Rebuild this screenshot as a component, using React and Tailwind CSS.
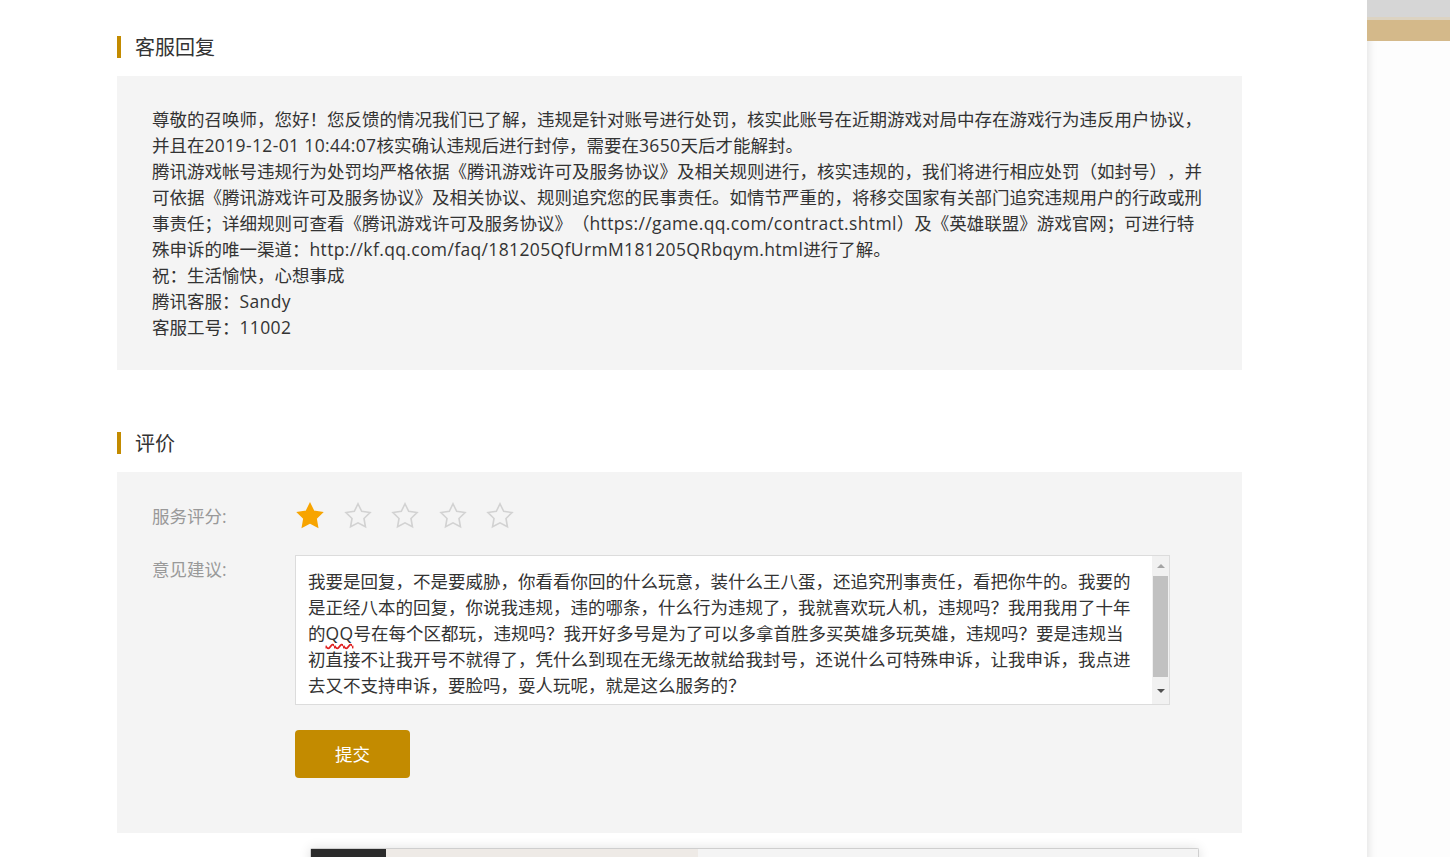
import React, { useState } from 'react';

const replyLines = [
  '尊敬的召唤师，您好！您反馈的情况我们已了解，违规是针对账号进行处罚，核实此账号在近期游戏对局中存在游戏行为违反用户协议，',
  '并且在2019-12-01 10:44:07核实确认违规后进行封停，需要在3650天后才能解封。',
  '腾讯游戏帐号违规行为处罚均严格依据《腾讯游戏许可及服务协议》及相关规则进行，核实违规的，我们将进行相应处罚（如封号），并',
  '可依据《腾讯游戏许可及服务协议》及相关协议、规则追究您的民事责任。如情节严重的，将移交国家有关部门追究违规用户的行政或刑',
  '事责任；详细规则可查看《腾讯游戏许可及服务协议》（https://game.qq.com/contract.shtml）及《英雄联盟》游戏官网；可进行特',
  '殊申诉的唯一渠道：http://kf.qq.com/faq/181205QfUrmM181205QRbqym.html进行了解。',
  '祝：生活愉快，心想事成',
  '腾讯客服：Sandy',
  '客服工号：11002',
];

const opinionLines = [
  '我要是回复，不是要威胁，你看看你回的什么玩意，装什么王八蛋，还追究刑事责任，看把你牛的。我要的',
  '是正经八本的回复，你说我违规，违的哪条，什么行为违规了，我就喜欢玩人机，违规吗？我用我用了十年',
  null,
  '初直接不让我开号不就得了，凭什么到现在无缘无故就给我封号，还说什么可特殊申诉，让我申诉，我点进',
  '去又不支持申诉，要脸吗，耍人玩呢，就是这么服务的？',
];

const font = { fontFamily: '"Open Sans", "Noto Sans CJK SC", sans-serif' };

function Mixed({ text }) {
  return text.split(/([\x00-\x7F]+)/).map((part, i) =>
    /^[\x00-\x7F]+$/.test(part) ? (
      <span key={i} className="tracking-[0.36px]">{part}</span>
    ) : (
      part
    )
  );
}

function Star({ filled, onClick }) {
  return (
    <svg
      onClick={onClick}
      viewBox="0 0 24 24"
      className="w-[30px] h-[30px] cursor-pointer"
      fill={filled ? '#f7a400' : 'none'}
      stroke={filled ? '#f7a400' : '#d2d2d2'}
      strokeWidth="1.3"
      strokeLinejoin="miter"
    >
      <path d="M12 2.2l2.95 6.1 6.65.95-4.8 4.7 1.15 6.65L12 17.45 6.05 20.6 7.2 13.95 2.4 9.25l6.65-.95z" />
    </svg>
  );
}

function SectionTitle({ children }) {
  return (
    <div className="flex items-center h-[22px]">
      <span className="w-[4px] h-[22px] bg-[#c38b00]"></span>
      <h2 className="ml-[14px] pt-[2px] text-[20px] leading-[22px] text-[#333]">{children}</h2>
    </div>
  );
}

export default function App() {
  const [rating, setRating] = useState(1);

  return (
    <div className="flex min-h-screen bg-white text-[#333] [text-spacing-trim:space-all]" style={font}>
      {/* Main Content */}
      <div className="flex-1 pl-[117px] pr-[125px] pt-[36px] overflow-hidden">
        <SectionTitle>客服回复</SectionTitle>

        <div className="mt-[18px] bg-[#f4f4f4] px-[35px] py-[30px] text-[17.5px] leading-[26px]">
          {replyLines.map((line, i) => (
            <div key={i} className="whitespace-nowrap"><Mixed text={line} /></div>
          ))}
        </div>

        <div className="mt-[62px]">
          <SectionTitle>评价</SectionTitle>
        </div>

        <div className="mt-[18px] bg-[#f4f4f4] pl-[35px] pt-[29px] pb-[55px]">
          {/* Rating */}
          <div className="flex items-center h-[30px]">
            <span className="w-[143px] text-[17.5px] text-[#999]">服务评分:</span>
            <div className="flex gap-[17.5px]">
              {[1, 2, 3, 4, 5].map(n => (
                <Star key={n} filled={n <= rating} onClick={() => setRating(n)} />
              ))}
            </div>
          </div>

          {/* Opinion */}
          <div className="flex mt-[24px]">
            <span className="w-[143px] pt-[1px] text-[17.5px] leading-[26px] text-[#999]">意见建议:</span>
            <div className="flex w-[875px] h-[150px] bg-white border border-[#dcdcdc]">
              <div className="flex-1 pl-[12px] pt-[12px] text-[17.5px] leading-[26px] text-[#333] overflow-hidden">
                {opinionLines.map((line, i) =>
                  line === null ? (
                    <div key={i} className="whitespace-nowrap">
                      的<span className="tracking-[0.36px] underline decoration-wavy decoration-[#e02020] underline-offset-[3px]">QQ</span>号在每个区都玩，违规吗？我开好多号是为了可以多拿首胜多买英雄多玩英雄，违规吗？要是违规当
                    </div>
                  ) : (
                    <div key={i} className="whitespace-nowrap">{line}</div>
                  )
                )}
              </div>
              {/* Scrollbar */}
              <div className="w-[17px] bg-[#f1f1f1] flex flex-col items-center">
                <div className="h-[20px] flex items-center justify-center">
                  <span className="w-0 h-0 border-l-[4px] border-r-[4px] border-b-[4px] border-l-transparent border-r-transparent border-b-[#a3a3a3]"></span>
                </div>
                <div className="w-[15px] h-[101px] bg-[#c1c1c1]"></div>
                <div className="flex-1 flex items-center justify-center">
                  <span className="w-0 h-0 border-l-[4px] border-r-[4px] border-t-[4px] border-l-transparent border-r-transparent border-t-[#505050]"></span>
                </div>
              </div>
            </div>
          </div>

          {/* Submit */}
          <div className="ml-[143px] mt-[25px]">
            <button className="w-[115px] h-[48px] rounded-[4px] bg-[#c38b00] text-white text-[17.5px]">提交</button>
          </div>
        </div>

        {/* Bottom player bar */}
        <div className="ml-[193px] mt-[15px] w-[889px] h-[40px] flex border-t border-x border-[#cfcfcf] rounded-t-[2px] shadow-[0_0_12px_rgba(0,0,0,0.12)]">
          <div className="w-[75px] bg-[#2b2b2b]"></div>
          <div className="w-[312px] bg-[#eeeae6]"></div>
          <div className="flex-1 bg-[#f4f4f4]"></div>
        </div>
      </div>

      {/* Right Panel */}
      <aside className="w-[83px] shrink-0 bg-[#fdfdfd] shadow-[inset_8px_0_8px_-6px_rgba(0,0,0,0.1)] flex flex-col">
        <div className="h-[17px] bg-[#d6d6d6]"></div>
        <div className="h-[3px] bg-[#dcd3c2]"></div>
        <div className="h-[21px] bg-[#d4b98a]"></div>
      </aside>
    </div>
  );
}
